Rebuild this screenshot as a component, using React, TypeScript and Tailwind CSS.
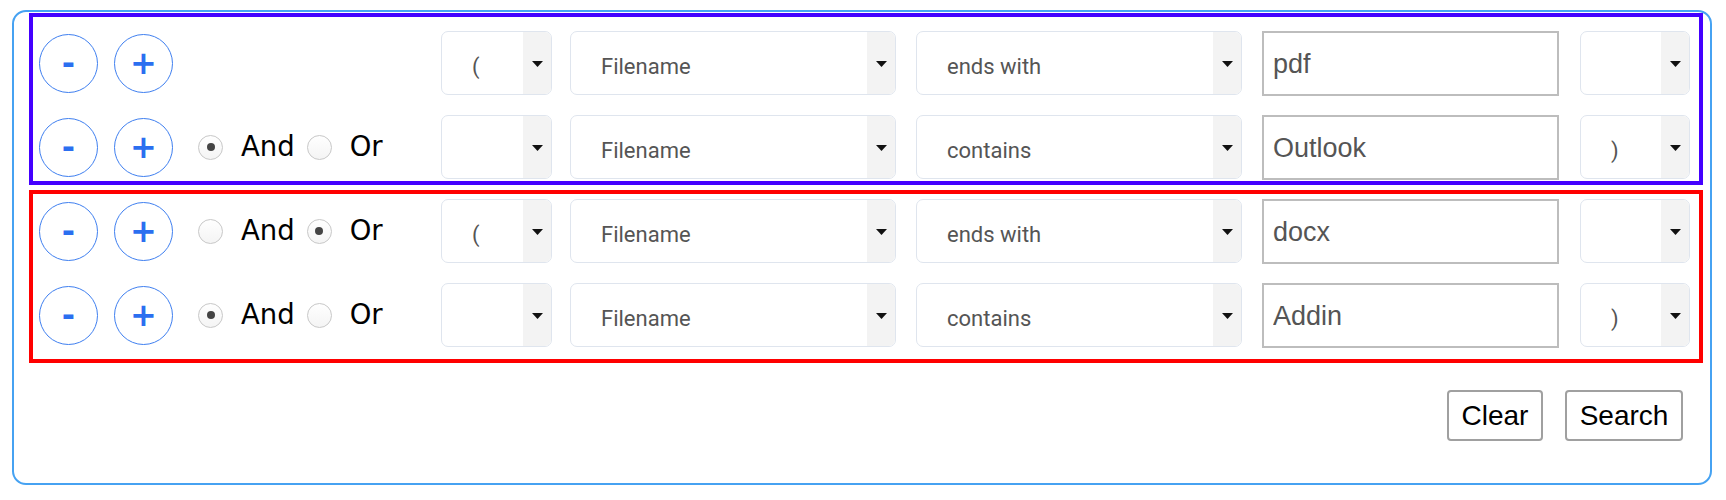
import React from "react";

interface Row {
  op: "And" | "Or" | null;
  open: string;
  field: string;
  cond: string;
  value: string;
  close: string;
}

interface Group {
  className: string;
  rows: Row[];
}

const groups: Group[] = [
  {
    className: "border-4 border-[#4400ff] pt-[14px] pb-[2px]",
    rows: [
      { op: null, open: "(", field: "Filename", cond: "ends with", value: "pdf", close: "" },
      { op: "And", open: "", field: "Filename", cond: "contains", value: "Outlook", close: ")" },
    ],
  },
  {
    className: "mt-[5px] border-4 border-[#ff0000] pt-[5px] pb-[12px]",
    rows: [
      { op: "Or", open: "(", field: "Filename", cond: "ends with", value: "docx", close: "" },
      { op: "And", open: "", field: "Filename", cond: "contains", value: "Addin", close: ")" },
    ],
  },
];

function RoundButton({ label }: { label: string }) {
  return (
    <button className="flex h-[59px] w-[59px] items-center justify-center rounded-full border-[1.5px] border-[#3f7ff0] bg-white font-['DejaVu_Sans',sans-serif] text-[32px] font-bold leading-none text-[#2b6ff0]">
      {label}
    </button>
  );
}

function Radio({ checked }: { checked: boolean }) {
  return (
    <span className="flex h-[25px] w-[25px] items-center justify-center rounded-full border-[1.5px] border-[#c8c8c8] bg-gradient-to-b from-white to-[#f4f4f4]">
      {checked && <span className="h-[8px] w-[8px] rounded-full bg-[#444]" />}
    </span>
  );
}

function Select({ text, className }: { text: string; className: string }) {
  return (
    <div
      className={`flex h-[64px] overflow-hidden rounded-[7px] border-[1.5px] border-[#dfe5ee] bg-white ${className}`}
    >
      <div className="flex flex-1 items-center pl-[30px] pt-[7px] font-['Roboto',sans-serif] text-[22px] text-[#555]">
        {text}
      </div>
      <div className="flex w-[28px] items-center justify-center bg-[#f3f3f3] pt-[2px]">
        <svg width="11" height="6" viewBox="0 0 11 6">
          <polygon points="0,0 11,0 5.5,6" fill="#111" />
        </svg>
      </div>
    </div>
  );
}

function ConditionRow({ row }: { row: Row }) {
  return (
    <div className="flex h-[64px] items-center">
      <div className="flex w-[408px] items-center pl-[6px]">
        <RoundButton label="-" />
        <div className="ml-[16px]">
          <RoundButton label="+" />
        </div>
        {row.op && (
          <div className="ml-[25px] flex items-center font-['DejaVu_Sans',sans-serif] text-[27.5px] text-black">
            <Radio checked={row.op === "And"} />
            <span className="ml-[18px]">And</span>
            <span className="ml-[12px]">
              <Radio checked={row.op === "Or"} />
            </span>
            <span className="ml-[18px]">Or</span>
          </div>
        )}
      </div>
      <Select text={row.open} className="w-[111px]" />
      <Select text={row.field} className="ml-[18px] w-[326px]" />
      <Select text={row.cond} className="ml-[20px] w-[326px]" />
      <input
        readOnly
        value={row.value}
        className="ml-[20px] h-[65px] w-[297px] border-2 border-[#bdbdbd] bg-white pl-[9px] pt-[3px] font-['Liberation_Sans',Arial,sans-serif] text-[27px] text-[#555] outline-none"
      />
      <Select text={row.close} className="ml-[21px] w-[110px]" />
    </div>
  );
}

export default function App() {
  return (
    <div className="min-h-[500px] bg-white pl-[12px] pt-[10px]">
      <div className="h-[475px] w-[1700px] rounded-[14px] border-2 border-[#46a2f2] pl-[15px] pr-[6px] pt-px">
        {groups.map((g, i) => (
          <div key={i} className={`flex w-[1674px] flex-col gap-[20px] ${g.className}`}>
            {g.rows.map((r, j) => (
              <ConditionRow key={j} row={r} />
            ))}
          </div>
        ))}
        <div className="mt-[27px] flex w-[1674px] justify-end gap-[22px] pr-[20px] font-['Liberation_Sans',Arial,sans-serif] text-[28px] text-black">
          <button className="h-[51px] w-[96px] rounded-[4px] border-2 border-[#a0a0a0] bg-white">Clear</button>
          <button className="h-[51px] w-[118px] rounded-[4px] border-2 border-[#a0a0a0] bg-white">Search</button>
        </div>
      </div>
    </div>
  );
}
